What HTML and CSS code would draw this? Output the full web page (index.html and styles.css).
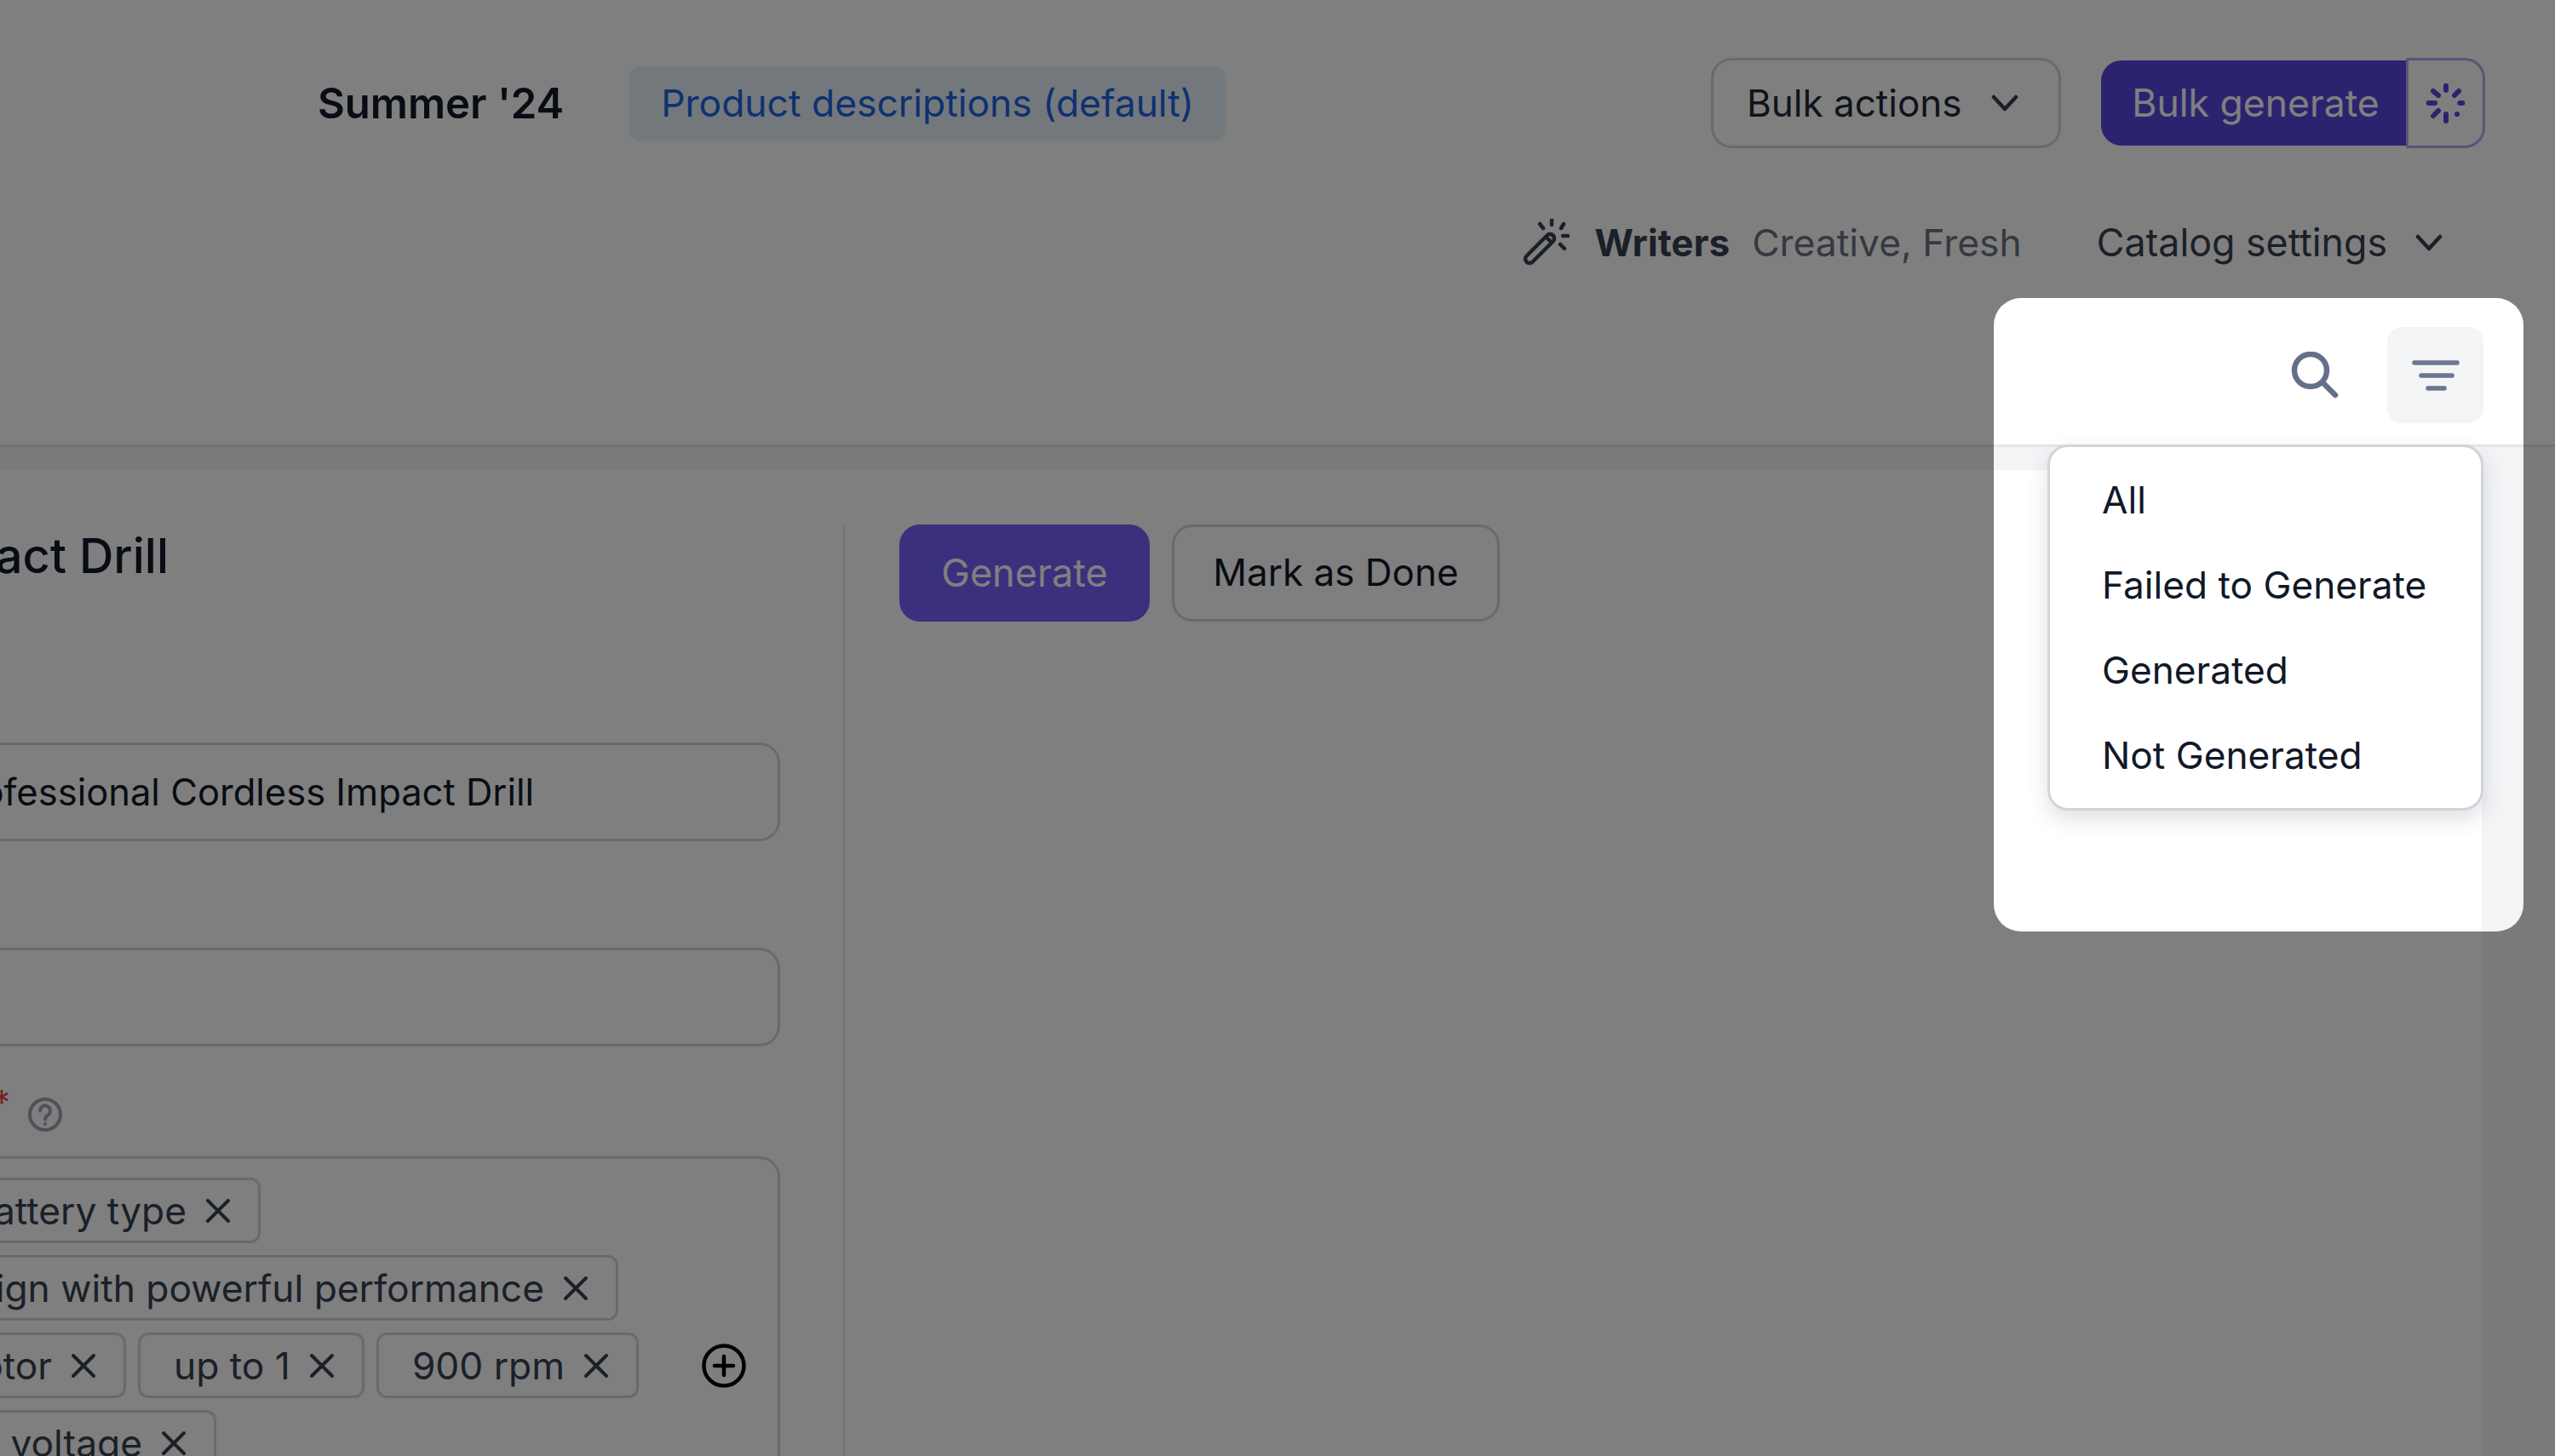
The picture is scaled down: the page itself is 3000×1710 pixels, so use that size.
FILE: index.html
```html
<!DOCTYPE html>
<html lang="en">
<head>
<meta charset="utf-8">
<title>Summer '24</title>
<link rel="stylesheet" href="styles.css">
</head>
<body>
<header class="header">
  <div class="topbar">
    <h1 class="catalog-name">Summer '24</h1>
    <span class="catalog-tag">Product descriptions (default)</span>
    <div class="top-actions">
      <button class="btn btn-outline btn-bulk">Bulk actions
        <svg class="chevron" viewBox="0 0 32 20"><path d="M3 3l13 14L29 3"/></svg>
      </button>
      <div class="generate-group">
        <button class="btn btn-primary btn-bulkgen">Bulk generate</button>
        <span class="spinner-box">
          <svg class="spinner" viewBox="0 0 52 52"><path d="M26 5.7v5M5.7 26H13M26 39v8M42.3 26h3M11 12l6 5M41 12l-5 5M11 41l6-6M39 39h.1"/></svg>
        </span>
      </div>
    </div>
  </div>
  <div class="subbar">
    <svg class="wand" viewBox="0 0 56 56"><path d="M5 44 30 19a5 5 0 0 1 7 7L12 51a5 5 0 0 1-7-7ZM28 21l7 7"/><path d="M35 1v6M21 6l4 5M49 6l-3 5M48 20h6M45 30l5 5"/></svg>
    <strong class="writers-label">Writers</strong>
    <span class="writers-value">Creative, Fresh</span>
    <span class="catalog-settings">Catalog settings</span>
    <svg class="chevron chevron-settings" viewBox="0 0 32 20"><path d="M3 3l13 14L29 3"/></svg>
  </div>
  <div class="toolbar">
    <svg class="search" viewBox="0 0 56 56"><circle cx="23" cy="22" r="19"/><path d="M37 36l15 15"/></svg>
    <span class="filter-btn">
      <svg class="filter" viewBox="0 0 56 40"><path d="M3 5h50M11 20h36M19 35h19"/></svg>
    </span>
    <ul class="filter-menu">
      <li>All</li>
      <li>Failed to Generate</li>
      <li>Generated</li>
      <li>Not Generated</li>
    </ul>
  </div>
</header>
<div class="band"></div>
<main class="main">
  <div class="content">
    <section class="left">
      <div class="title-row"><h2 class="title">Impact Drill</h2></div>
      <div class="form">
        <div class="input input-first">Professional Cordless Impact Drill</div>
        <div class="input input-second"></div>
        <div class="label-row">
          <span class="required">*</span>
          <svg class="help" viewBox="0 0 40 40"><circle cx="20" cy="20" r="18"/><path d="M14 15.5a6 6 0 1 1 9.5 5c-2.5 1.7-3.5 2.6-3.5 5"/><path d="M20 31v.1"/></svg>
        </div>
        <div class="tags">
          <div class="tag-row row-one">
            <span class="tag">Battery type<svg class="x" viewBox="0 0 30 30"><path d="M3 3l24 24M27 3L3 27"/></svg></span>
          </div>
          <div class="tag-row row-two">
            <span class="tag">Ergonomic design with powerful performance<svg class="x" viewBox="0 0 30 30"><path d="M3 3l24 24M27 3L3 27"/></svg></span>
          </div>
          <div class="tag-row row-three">
            <span class="tag">Motor<svg class="x" viewBox="0 0 30 30"><path d="M3 3l24 24M27 3L3 27"/></svg></span>
            <span class="tag">up to 1<svg class="x" viewBox="0 0 30 30"><path d="M3 3l24 24M27 3L3 27"/></svg></span>
            <span class="tag">900 rpm<svg class="x" viewBox="0 0 30 30"><path d="M3 3l24 24M27 3L3 27"/></svg></span>
            <svg class="add" viewBox="0 0 52 52"><circle cx="26" cy="26" r="23.5"/><path d="M26 15v22M15 26h22"/></svg>
          </div>
          <div class="tag-row row-four">
            <span class="tag">18V voltage<svg class="x" viewBox="0 0 30 30"><path d="M3 3l24 24M27 3L3 27"/></svg></span>
          </div>
        </div>
      </div>
    </section>
    <section class="right">
      <button class="btn btn-primary btn-generate">Generate</button>
      <button class="btn btn-outline btn-done">Mark as Done</button>
    </section>
  </div>
  <aside class="rail"></aside>
</main>
<div class="spotlight"></div>
</body>
</html>
```

FILE: styles.css
```css
* { box-sizing: border-box; }
html, body { margin: 0; padding: 0; overflow: hidden; }
body {
  width: 3000px;
  height: 1710px;
  position: relative;
  background: #fff;
  color: #111827;
  font-family: Inter, "Liberation Sans", sans-serif;
  font-size: 44px;
  display: flex;
  flex-direction: column;
}
h1, h2, ul { margin: 0; padding: 0; }
svg { display: block; flex: none; fill: none; stroke-linecap: round; stroke-linejoin: round; }

.header { height: 522px; flex: none; }

.topbar {
  display: flex;
  align-items: center;
  height: 106px;
  margin-top: 68px;
  padding: 0 82px 0 373px;
}
.catalog-name { font-size: 49px; font-weight: 600; color: #111827; line-height: 1; }
.catalog-tag {
  margin-left: 77px;
  height: 87px;
  display: flex;
  align-items: center;
  padding: 0 37px;
  border-radius: 12px;
  background: #e6f1f8;
  color: #1e63e0;
  font-size: 44.4px;
}
.top-actions { margin-left: auto; display: flex; align-items: center; gap: 47px; }

.btn {
  font-family: inherit;
  display: flex;
  align-items: center;
  justify-content: center;
  border-radius: 24px;
  padding: 0;
  font-size: 44px;
}
.btn-outline { background: #fff; border: 3px solid #d1d5db; color: #111827; }
.btn-primary { background: #5846e0; border: 0; color: #fff; }

.btn-bulk { width: 411px; height: 106px; gap: 35px; color: #1f2937; justify-content: flex-start; padding-left: 39px; }
.chevron { width: 32px; height: 20px; stroke: #374151; stroke-width: 4.5; }

.generate-group { display: flex; align-items: center; }
.btn-bulkgen { width: 358px; height: 100px; border-radius: 24px 0 0 24px; padding-left: 5px; font-size: 44.5px; }
.spinner-box {
  width: 93px;
  height: 106px;
  display: flex;
  align-items: center;
  justify-content: center;
  border: 3px solid #b4a8f0;
  border-radius: 0 24px 24px 0;
}
.spinner { width: 52px; height: 52px; stroke: #5846e0; stroke-width: 6; }

.subbar {
  display: flex;
  align-items: center;
  justify-content: flex-end;
  height: 60px;
  margin-top: 81px;
  padding-right: 132px;
}
.wand { width: 56px; height: 56px; stroke: #374151; stroke-width: 4.5; margin-right: 29px; }
.writers-label { font-size: 44px; font-weight: 700; color: #374151; }
.writers-value { font-size: 44.4px; color: #6b7280; margin-left: 26px; }
.catalog-settings { font-size: 44.7px; color: #374151; margin-left: 88px; }
.chevron-settings { margin-left: 33px; }

.toolbar {
  position: relative;
  display: flex;
  align-items: center;
  justify-content: flex-end;
  height: 113px;
  margin-top: 69px;
  padding-right: 84px;
  gap: 57px;
}
.search { width: 56px; height: 56px; stroke: #64708a; stroke-width: 6.5; }
.filter-btn {
  width: 113px;
  height: 113px;
  display: flex;
  align-items: center;
  justify-content: center;
  border-radius: 18px;
  background: #f3f4f6;
}
.filter { width: 56px; height: 40px; stroke: #6b7690; stroke-width: 5.5; }

.filter-menu {
  position: absolute;
  top: 138px;
  right: 84px;
  z-index: 2;
  width: 512px;
  height: 430px;
  padding: 12px 0;
  list-style: none;
  background: #fff;
  border: 3px solid #d1d5db;
  border-radius: 24px;
  box-shadow: 0 10px 24px rgba(55, 65, 81, .16);
}
.filter-menu li {
  height: 100px;
  line-height: 100px;
  padding-left: 61px;
  font-size: 44.2px;
  color: #111827;
}

.band {
  height: 30px;
  flex: none;
  background: #f3f4f6;
  border-top: 3px solid #e5e7eb;
}

.main { flex: 1; display: flex; min-height: 0; overflow: hidden; }
.content { flex: 1; display: flex; padding-top: 64px; min-width: 0; }
.rail { width: 86px; flex: none; background: #f3f4f6; }

.left { width: 992px; flex: none; border-right: 2px solid #e5e7eb; }
.title-row { width: 198px; height: 74px; display: flex; justify-content: flex-end; align-items: center; }
.title { font-size: 56px; font-weight: 500; color: #111827; white-space: nowrap; flex: none; }

.form { margin-left: -92px; width: 1008px; }
.input {
  height: 116px;
  display: flex;
  align-items: center;
  padding-left: 24px;
  border: 3px solid #d1d5db;
  border-radius: 24px;
  font-size: 43.5px;
  color: #111827;
}
.input-first { margin-top: 182px; }
.input-second { margin-top: 125px; }

.label-row {
  display: flex;
  align-items: center;
  justify-content: flex-end;
  width: 165px;
  height: 41px;
  margin-top: 59px;
}
.required { color: #ef4444; font-size: 40px; line-height: 41px; align-self: flex-start; margin: -14px 21px 0 0; }
.help { width: 40px; height: 40px; stroke: #9ca3af; stroke-width: 4; }

.tags {
  margin-top: 29px;
  height: 380px;
  padding: 22px 0 0 89px;
  border: 3px solid #d1d5db;
  border-radius: 24px;
  display: flex;
  flex-direction: column;
  gap: 14px;
}
.tag-row { display: flex; justify-content: flex-end; align-items: center; gap: 14px; height: 77px; flex: none; }
.row-one { width: 306px; }
.row-two { width: 726px; }
.row-three { width: 876px; }
.row-four { width: 254px; }
.tag {
  flex: none;
  display: flex;
  align-items: center;
  gap: 22px;
  height: 77px;
  padding: 0 32px 0 39px;
  border: 3px solid #d1d5db;
  border-radius: 12px;
  font-size: 44.3px;
  white-space: nowrap;
  color: #374151;
}
.x { width: 30px; height: 30px; stroke: #374151; stroke-width: 4; }
.add { width: 52px; height: 52px; stroke: #000; stroke-width: 4.5; margin-left: 60px; }

.right { display: flex; align-items: flex-start; gap: 26px; padding-left: 64px; }
.btn-generate { width: 294px; height: 114px; background: #7460fb; font-size: 45px; padding-bottom: 2px; }
.btn-done { width: 385px; height: 114px; padding-bottom: 2px; }

.spotlight {
  position: absolute;
  left: 2341px;
  top: 350px;
  width: 622px;
  height: 744px;
  border-radius: 32px;
  box-shadow: 0 0 0 4000px rgba(0, 0, 0, .5);
  z-index: 5;
  pointer-events: none;
}
```
